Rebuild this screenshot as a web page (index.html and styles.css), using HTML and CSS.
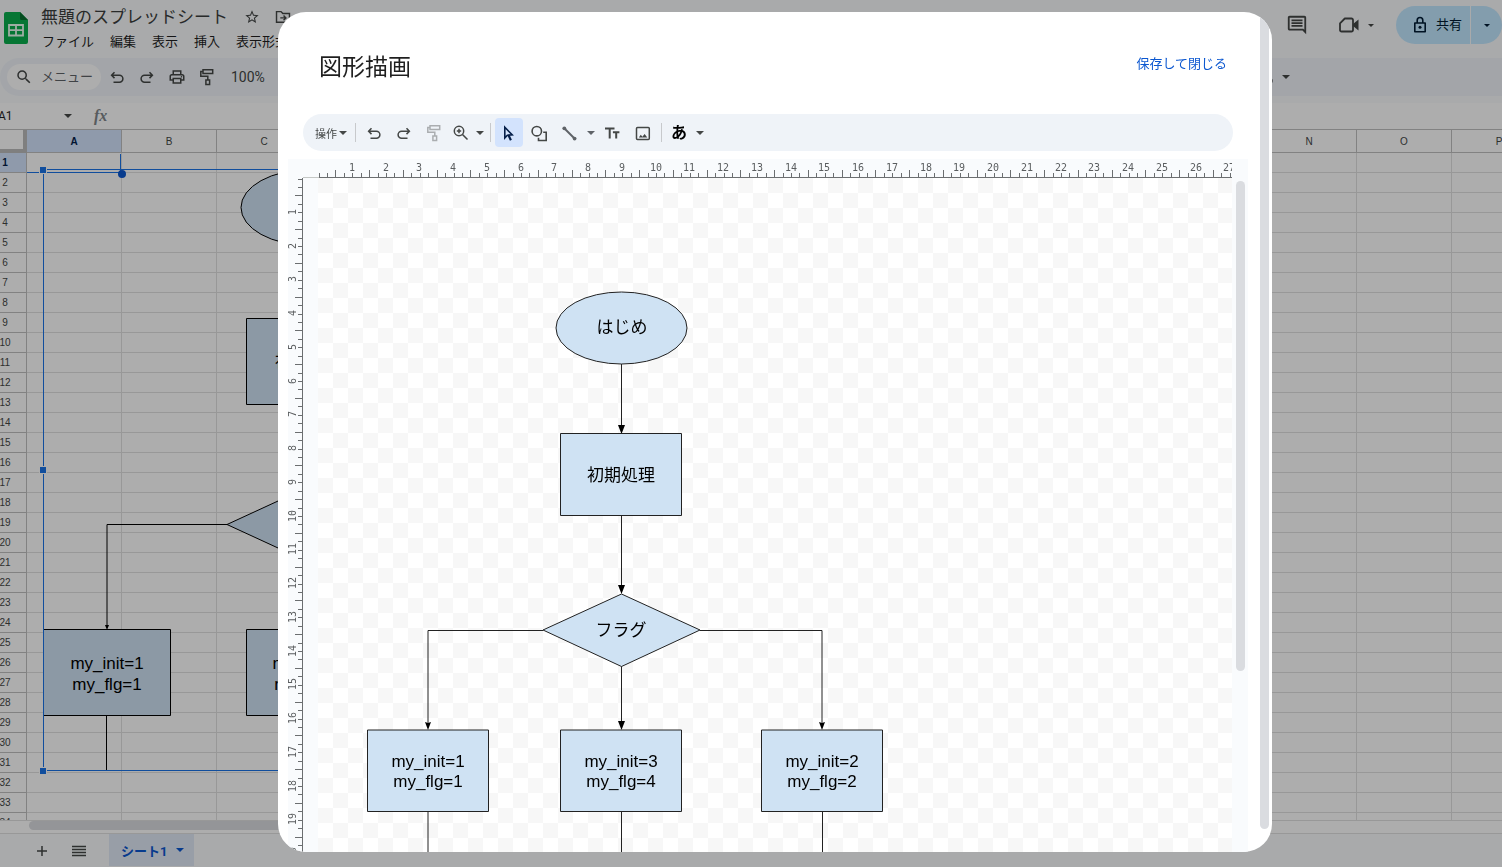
FILE: index.html
```html
<!DOCTYPE html>
<html lang="ja">
<head>
<meta charset="utf-8">
<title>無題のスプレッドシート</title>
<link rel="stylesheet" href="styles.css">
</head>
<body>
<svg class="defs" aria-hidden="true">
  <symbol id="i-caret" viewBox="0 0 8 4"><path d="M0 0h8L4 4z" fill="currentColor"/></symbol>
  <symbol id="i-undo" viewBox="0 0 18 18"><g fill="none" stroke="currentColor" stroke-width="1.5"><path d="M6.500 4.300 3.600 7.200l2.900 2.900M4 7.200h7.400a3.500 3.500 0 0 1 0 7H5.500"/></g></symbol>
  <symbol id="i-redo" viewBox="0 0 18 18"><g fill="none" stroke="currentColor" stroke-width="1.5"><path d="M11.500 4.300l2.900 2.900-2.900 2.900M14 7.200H6.600a3.500 3.500 0 0 0 0 7h5.900"/></g></symbol>
  <symbol id="i-paint" viewBox="0 0 18 18"><g fill="none" stroke="currentColor" stroke-width="1.5"><path d="M5 1.800h9.700v3.700H5zM5 3.600H2.800v4.600h7v3.600M7.900 11.900h3.700v4.500H7.900z"/></g></symbol>
  <symbol id="i-search" viewBox="0 0 24 24"><path fill="currentColor" d="M15.500 14h-.79l-.28-.27A6.471 6.471 0 0 0 16 9.500 6.500 6.500 0 1 0 9.500 16c1.610 0 3.090-.59 4.230-1.570l.27.28v.79l5 4.990L20.490 19l-4.990-5zm-6 0C7.010 14 5 11.990 5 9.500S7.010 5 9.500 5 14 7.010 14 9.500 11.990 14 9.500 14z"/></symbol>
  <symbol id="i-print" viewBox="0 0 24 24"><path fill="currentColor" d="M19 8h-1V3H6v5H5c-1.660 0-3 1.340-3 3v6h4v4h12v-4h4v-6c0-1.660-1.340-3-3-3zM8 5h8v3H8V5zm8 12v2H8v-4h8v2zm2-2v-2H6v2H4v-4c0-.55.45-1 1-1h14c.55 0 1 .45 1 1v4h-2z"/><circle cx="18" cy="11.500" r="1" fill="currentColor"/></symbol>
  <symbol id="i-star" viewBox="0 0 24 24"><path fill="currentColor" d="M22 9.240l-7.190-.62L12 2 9.190 8.630 2 9.240l5.460 4.730L5.820 21 12 17.270 18.180 21l-1.630-7.030L22 9.240zM12 15.400l-3.760 2.270 1-4.280-3.320-2.880 4.380-.38L12 6.100l1.710 4.040 4.380.38-3.320 2.880 1 4.280L12 15.400z"/></symbol>
  <symbol id="i-move" viewBox="0 0 20 18"><g fill="none" stroke="currentColor" stroke-width="1.600"><path d="M2.800 3h5l2 2.200h7.400v9.600H2.800zM7 10h6M10.600 7.400l2.600 2.600-2.600 2.600"/></g></symbol>
  <symbol id="i-comment" viewBox="0 0 24 24"><path fill="currentColor" d="M21.990 4c0-1.100-.89-2-1.990-2H4c-1.100 0-2 .9-2 2v12c0 1.100.9 2 2 2h14l4 4-.01-18zM20 4v13.170L18.830 16H4V4h16zM6 12h12v2H6zm0-3h12v2H6zm0-3h12v2H6z"/></symbol>
  <symbol id="i-video" viewBox="0 0 20 18"><path d="M5.800 2.500h6.700a1.500 1.500 0 0 1 1.500 1.500v10a1.500 1.500 0 0 1-1.500 1.500h-10A1.500 1.500 0 0 1 1 14V7.300z" fill="none" stroke="currentColor" stroke-width="1.800" stroke-linejoin="round"/><path d="M14 8l5.500-4.500v11L14 10z" fill="currentColor"/></symbol>
  <symbol id="i-lock" viewBox="0 0 14 18"><path d="M1.800 7h10.400v8.700H1.800zM4.200 7V4.300a2.800 2.800 0 0 1 5.600 0V7" fill="none" stroke="currentColor" stroke-width="1.600" stroke-linejoin="round"/><circle cx="7" cy="11.300" r="1.500" fill="currentColor"/></symbol>
  <symbol id="i-zoom" viewBox="0 0 18 18"><g fill="none" stroke="currentColor" stroke-width="1.500"><circle cx="7" cy="7" r="4.700"/><path d="M10.500 10.500l5 5M7 4.800v4.400M4.800 7h4.400"/></g></symbol>
  <symbol id="i-select" viewBox="0 0 18 18"><path d="M4.800 3.300v10.600l2.600-2.700 4.800-.4z" fill="none" stroke="currentColor" stroke-width="1.600"/><path d="M8.300 10.800l2.600 5.400" stroke="currentColor" stroke-width="2.200"/></symbol>
  <symbol id="i-shapes" viewBox="0 0 18 18"><g fill="none" stroke="currentColor" stroke-width="1.600"><circle cx="6.800" cy="7.200" r="4.700"/><path d="M13.200 8.200h3v8.300H8.500v-2.800"/></g></symbol>
  <symbol id="i-line" viewBox="0 0 18 18"><path d="M4 4l10.500 10.500" stroke="currentColor" stroke-width="2"/><circle cx="4.300" cy="4.300" r="1.900" fill="currentColor"/><circle cx="14.600" cy="14.600" r="1.900" fill="currentColor"/></symbol>
  <symbol id="i-text" viewBox="0 0 18 18"><path d="M1 4.500h9.500M5.700 4.500v10M8.900 8.300h6.500M12.200 8.300v6.200" fill="none" stroke="currentColor" stroke-width="2"/></symbol>
  <symbol id="i-image" viewBox="0 0 18 18"><rect x="2.500" y="3.500" width="12.800" height="12" rx="1" fill="none" stroke="currentColor" stroke-width="1.500"/><path d="M4.800 13.500l2-2.700 1.600 1.900 2.200-2.800 2.700 3.600z" fill="currentColor"/></symbol>
</svg>

<div class="app">
  <header class="top">
    <svg class="logo" viewBox="0 0 24 32" aria-hidden="true">
      <path d="M2 0h14l8 8v22a2 2 0 0 1-2 2H2a2 2 0 0 1-2-2V2a2 2 0 0 1 2-2z" fill="#0aae4d"/>
      <path d="M16 0l8 8h-6.500A1.500 1.500 0 0 1 16 6.500z" fill="#06702f"/>
      <path d="M5 13h14v10.500H5zM5 18.200h14M12 13v10.500" fill="none" stroke="#eafff2" stroke-width="1.800"/>
    </svg>
    <div class="doc">
      <div class="doc-name"><h1>無題のスプレッドシート</h1>
        <button class="plain" aria-label="スター"><svg class="ic16"><use href="#i-star"/></svg></button>
        <button class="plain" aria-label="移動"><svg class="ic18"><use href="#i-move"/></svg></button>
      </div>
      <nav class="menus">
        <button class="plain">ファイル</button><button class="plain">編集</button><button class="plain">表示</button><button class="plain">挿入</button><button class="plain">表示形式</button>
      </nav>
    </div>
    <div class="top-right">
      <button class="plain" aria-label="コメント"><svg class="ic22"><use href="#i-comment"/></svg></button>
      <button class="plain meet" aria-label="ビデオ会議"><svg class="ic20"><use href="#i-video"/></svg><svg class="caret-small"><use href="#i-caret"/></svg></button>
      <div class="share">
        <button class="share-main"><svg class="lock"><use href="#i-lock"/></svg><span>共有</span></button>
        <button class="share-more" aria-label="共有オプション"><svg class="caret-small"><use href="#i-caret"/></svg></button>
      </div>
    </div>
  </header>

  <div class="toolbar">
    <label class="search"><svg class="ic18"><use href="#i-search"/></svg><input type="text" placeholder="メニュー" aria-label="メニュー"></label>
    <button class="bar-btn" aria-label="元に戻す"><svg class="ic18"><use href="#i-undo"/></svg></button>
    <button class="bar-btn" aria-label="やり直す"><svg class="ic18"><use href="#i-redo"/></svg></button>
    <button class="bar-btn" aria-label="印刷"><svg class="ic18"><use href="#i-print"/></svg></button>
    <button class="bar-btn" aria-label="書式の貼り付け"><svg class="ic18"><use href="#i-paint"/></svg></button>
    <button class="plain zoom-level">100%</button>
    <button class="plain input-tools" aria-label="入力ツール"><svg class="ime-edge" viewBox="0 0 12 14"><circle cx="8" cy="11" r="2.500" fill="none" stroke="#000" stroke-width="2"/></svg><svg class="caret"><use href="#i-caret"/></svg></button>
  </div>

  <div class="formula">
    <input class="name-box" type="text" value="A1" aria-label="名前ボックス">
    <svg class="caret"><use href="#i-caret"/></svg>
    <span class="fx">fx</span>
  </div>

  <main class="sheet">
    <table class="grid"><thead></thead><tbody></tbody></table>
    <svg class="sheet-drawing" aria-hidden="true">
      <g transform="translate(0 -130)">
        <path d="M27 172.500h93.500V154" fill="none" stroke="#1a73e8"/>
        <g fill="#cfe2f3" stroke="#000">
          <ellipse cx="309.500" cy="207.500" rx="68.500" ry="38"/>
          <path d="M246.500 318.500h127v86h-127zM227 524.500l82.500-38 82.500 38-82.500 38zM43.500 629.500h127v86h-127zM246.500 629.500h127v86h-127z"/>
        </g>
        <path d="M227 524.500H107V626M106.500 716v54" fill="none" stroke="#000"/>
        <path d="M107 630l-2-5h4z"/>
        <g class="svg-label"><text x="309" y="367">初期処理</text><text x="107" y="669">my_init=1</text><text x="107" y="690">my_flg=1</text><text x="309" y="669">my_init=3</text><text x="309" y="690">my_flg=4</text></g>
        <path d="M400 169.500H43.500v601H400" fill="none" stroke="#1a73e8"/>
        <g fill="#1a73e8" stroke="#fff"><rect x="39.500" y="166.500" width="7" height="7"/><rect x="39.500" y="466.500" width="7" height="7"/><rect x="39.500" y="767.500" width="7" height="7"/></g>
        <circle cx="122" cy="174" r="4" fill="#0b57d0"/>
      </g>
    </svg>
  </main>
  <div class="hscroll"><div class="hthumb"></div></div>
  <footer class="tabs">
    <button class="plain tab-ic" aria-label="シートを追加"><svg class="ic14" viewBox="0 0 14 14"><path d="M7 2v10M2 7h10" stroke="currentColor" stroke-width="1.500"/></svg></button>
    <button class="plain tab-ic" aria-label="すべてのシート"><svg class="ic14" viewBox="0 0 14 14"><path d="M0 2.500h14M0 5.500h14M0 8.500h14M0 11.500h14" stroke="currentColor" stroke-width="1.300"/></svg></button>
    <button class="tab">シート1<svg class="caret"><use href="#i-caret"/></svg></button>
  </footer>
</div>

<div class="scrim">
  <section class="dialog" role="dialog" aria-labelledby="dialog-title">
    <header class="dialog-head">
      <h2 id="dialog-title">図形描画</h2>
      <a href="#">保存して閉じる</a>
    </header>
    <div class="draw-bar">
      <button class="plain actions">操作<svg class="caret"><use href="#i-caret"/></svg></button>
      <i class="sep"></i>
      <button class="tool" aria-label="元に戻す"><svg class="ic18"><use href="#i-undo"/></svg></button>
      <button class="tool" aria-label="やり直す"><svg class="ic18"><use href="#i-redo"/></svg></button>
      <button class="tool" aria-label="書式の貼り付け" disabled><svg class="ic18"><use href="#i-paint"/></svg></button>
      <button class="split tight" aria-label="ズーム"><span><svg class="ic18"><use href="#i-zoom"/></svg></span><svg class="caret"><use href="#i-caret"/></svg></button>
      <i class="sep"></i>
      <button class="tool active" aria-label="選択"><svg class="ic18"><use href="#i-select"/></svg></button>
      <button class="tool" aria-label="図形"><svg class="ic18"><use href="#i-shapes"/></svg></button>
      <button class="split line" aria-label="線"><span><svg class="ic18"><use href="#i-line"/></svg></span><svg class="caret"><use href="#i-caret"/></svg></button>
      <button class="tool" aria-label="テキスト ボックス"><svg class="ic18"><use href="#i-text"/></svg></button>
      <button class="tool" aria-label="画像"><svg class="ic18"><use href="#i-image"/></svg></button>
      <i class="sep"></i>
      <button class="split ime"><span>あ</span><svg class="caret"><use href="#i-caret"/></svg></button>
    </div>
    <div class="stage">
      <svg class="ruler-h"></svg>
      <svg class="ruler-v"></svg>
      <div class="board">
        <svg class="chart">
          <g transform="translate(-318 -178)">
            <g fill="none" stroke="#222"><path d="M621.500 364v63M621.500 516v72M621.500 666v57M543 630.500H428V723M700 630.500h122V723M428 811v60M621.500 811v60M822.500 811v60"/></g>
            <path d="M621.500 434l-3.500-9h7zM621.500 594l-3.500-9h7zM621.500 730l-3.500-9h7zM428 730l-3-8 3 1 3-1zM822 730l-3-8 3 1 3-1z"/>
            <g fill="#cfe2f3" stroke="#222">
              <ellipse cx="621.500" cy="328" rx="65.500" ry="36"/>
              <path d="M560.500 433.500h121v82h-121zM543 630l78.500-36 78.500 36-78.500 36.500zM367.500 730h121v81.500h-121zM560.500 730h121v81.500h-121zM761.500 730h121v81.500h-121z"/>
            </g>
            <g class="svg-label">
              <text x="622" y="333">はじめ</text><text x="621" y="481">初期処理</text><text x="621" y="636">フラグ</text>
              <text x="428" y="767">my_init=1</text><text x="428" y="787">my_flg=1</text>
              <text x="621" y="767">my_init=3</text><text x="621" y="787">my_flg=4</text>
              <text x="822" y="767">my_init=2</text><text x="822" y="787">my_flg=2</text>
            </g>
          </g>
        </svg>
      </div>
      <div class="vscroll"><div class="vthumb"></div></div>
    </div>
    <div class="dialog-scroll"></div>
  </section>
</div>
<script src="script.js"></script>
</body>
</html>
```
FILE: styles.css
```css
* { box-sizing: border-box; }
body {
  margin: 0;
  height: 100vh;
  overflow: hidden;
  font-family: Roboto, "Noto Sans CJK JP", sans-serif;
  font-size: 13px;
  color: #1f1f1f;
}
button, input { font: inherit; color: inherit; border: 0; background: none; padding: 0; margin: 0; }
svg { display: block; flex: none; }
h1, h2 { margin: 0; font-weight: 400; }
.defs { position: absolute; width: 0; height: 0; }
.plain { display: flex; align-items: center; white-space: nowrap; }
.ic14 { width: 14px; height: 14px; }
.ic16 { width: 16px; height: 16px; }
.ic18 { width: 18px; height: 18px; }
.ic20 { width: 20px; height: 18px; }
.ic22 { width: 22px; height: 22px; }
.caret { width: 8px; height: 4px; }
.caret-small { width: 6px; height: 3px; }

.app { height: 100%; display: flex; flex-direction: column; background: #f9fbfd; }

.top { display: flex; height: 58px; flex: none; color: #444746; }
.logo { width: 24px; height: 32px; margin: 12px 13px 0 4px; }
.doc { display: flex; flex-direction: column; padding-top: 5px; }
.doc-name { display: flex; align-items: center; height: 24px; gap: 14px; }
.doc-name h1 { font-size: 17px; line-height: 24px; margin-right: 2px; color: #3c3f3e; }
.menus { display: flex; gap: 16px; height: 22px; padding-left: 1px; color: #1f1f1f; }
.top-right { display: flex; align-items: center; height: 38px; margin: 6px 0 0 auto; }
.meet { gap: 9px; margin: 0 22px 0 31px; }
.share { display: flex; height: 38px; gap: 1px; color: #001d35; }
.share-main { display: flex; align-items: center; gap: 9px; width: 74px; padding-left: 17px; background: #c2e7ff; border-radius: 19px 0 0 19px; }
.share-main span { padding-bottom: 3px; }
.share-more { display: flex; align-items: center; justify-content: center; width: 31px; background: #c2e7ff; border-radius: 0 19px 19px 0; }
.lock { width: 14px; height: 18px; }

.toolbar { display: flex; align-items: center; height: 38px; flex: none; padding-left: 7px; background: #f0f4f9; border-radius: 19px 0 0 19px; color: #444746; }
.search { display: flex; align-items: center; gap: 8px; width: 94px; height: 26px; padding: 0 7px 0 8px; background: #fff; border-radius: 13px; }
.search input { width: 56px; height: 18px; padding-bottom: 2px; }
.search input::placeholder { color: #5f6368; opacity: 1; }
.bar-btn { display: flex; justify-content: center; width: 30px; }
.search + .bar-btn { margin-left: 1px; }
.zoom-level { margin-left: 9px; font-size: 14px; }
.input-tools { gap: 9px; margin: 0 212px 0 auto; }
.ime-edge { width: 12px; height: 14px; }

.formula { display: flex; align-items: center; height: 27px; flex: none; margin-top: 7px; background: #fff; color: #444746; border-bottom: 1px solid #c0c0c0; }
.name-box { width: 66px; margin-left: -2px; font: 12px Roboto, sans-serif; color: #1f1f1f; }
.fx { margin-left: 22px; font: italic bold 16px "Liberation Serif", serif; color: #80868b; }

.sheet { position: relative; flex: 1; min-height: 0; overflow: hidden; background: #fff; }
.grid { margin-left: -19px; border-collapse: separate; border-spacing: 0; table-layout: fixed; font: 10px "Liberation Sans", Arial, sans-serif; }
.grid th, .grid td { height: 20px; padding: 0; border: solid #e1e1e1; border-width: 0 1px 1px 0; }
.grid th { font-weight: 400; text-align: center; border-color: #c0c0c0; color: #444746; }
.grid tbody th { padding-left: 3px; }
.grid thead th { height: 23px; width: 95px; }
.grid thead th:first-child { width: 46px; border: solid #bcbcbc; border-width: 0 4px 4px 0; }
.grid .on { background: #d3e3fd; color: #041e49; font-weight: 700; }
.sheet-drawing { position: absolute; left: 0; top: 0; width: 400px; height: 100%; }
.svg-label { font: 17px "Liberation Sans", "Noto Sans CJK JP", sans-serif; text-anchor: middle; fill: #000; }

.hscroll { flex: none; height: 13px; background: #fff; border-top: 1px solid #e1e1e1; padding-left: 29px; }
.hthumb { width: 60%; height: 9px; background: #dadce0; border-radius: 5px; }
.tabs { display: flex; flex: none; height: 34px; padding-left: 35px; border-top: 1px solid #e1e1e1; color: #444746; }
.tab-ic { margin-right: 23px; }
.tab { display: flex; align-items: center; gap: 9px; height: 32px; padding: 0 10px 0 12px; font-weight: 700; font-size: 13px; background: #e1e9f7; color: #0b57d0; }

.scrim { position: fixed; inset: 0; display: flex; padding: 12px 230px 15px 278px; background: rgba(0, 0, 0, .32); }
.dialog { position: relative; flex: 1; min-width: 0; display: flex; flex-direction: column; overflow: hidden; background: #fff; border-radius: 28px; }
.dialog-head { display: flex; justify-content: space-between; align-items: flex-start; height: 102px; flex: none; padding: 39px 45px 0 41px; }
.dialog-head h2 { font-size: 23px; line-height: 34px; }
.dialog-head a { color: #0b57d0; text-decoration: none; line-height: 26px; }

.draw-bar { display: flex; align-items: center; height: 37px; flex: none; margin: 0 39px 0 25px; padding-left: 12px; background: #eff3f8; border-radius: 19px; color: #444746; }
.actions { font-size: 11px; gap: 2px; margin-right: 5px; }
.sep { width: 1px; height: 19px; margin: 0 3px; background: #c7c9cc; }
.tool { display: flex; align-items: center; justify-content: center; width: 28px; height: 29px; margin: 0 1px; border-radius: 4px; }
.tool:disabled { opacity: .4; }
.tool.active { background: #d3e3fd; color: #041e49; }
.split { display: flex; align-items: center; gap: 3px; padding-right: 3px; }
.split span { display: flex; justify-content: center; width: 30px; }
.split.tight span { width: 24px; }
.split.line { color: #5f6368; }
.split.ime span { width: 28px; font-size: 16px; line-height: 24px; font-weight: 700; color: #000; }

.stage { flex: 1; min-height: 0; display: grid; grid-template-columns: 15px 15px minmax(0, 1fr) 16px; grid-template-rows: 19px minmax(0, 1fr); margin: 8px 24px 0 10px; background: #f9fbfd; }
.ruler-h { grid-area: 1 / 2 / 2 / 4; width: 100%; height: 19px; overflow: hidden; }
.ruler-v { grid-area: 2 / 1; width: 15px; height: 100%; overflow: hidden; }
.ruler-h text, .ruler-v text { font: 10px "DejaVu Sans Mono", monospace; text-anchor: middle; fill: #5a5d5f; }
.ruler-h path, .ruler-v path { stroke: #6b6e70; fill: none; }
.board { grid-area: 2 / 3; overflow: hidden; background: repeating-conic-gradient(#fff 0 25%, #f7f7f7 0 50%) 0 0 / 30px 30px; }
.chart { width: 100%; height: 100%; }
.vscroll { grid-area: 2 / 4; padding: 3px 3px 0 4px; }
.vthumb { height: 73%; background: #dadce0; border-radius: 5px; }
.dialog-scroll { position: absolute; top: 0; right: 3px; bottom: 23px; width: 9px; background: #dadce0; border-radius: 5px; }
```
FILE: script.js
```js
// Spreadsheet cells: enough columns and rows to fill the window
const sheet = document.querySelector(".sheet");
const cols = Math.ceil((sheet.clientWidth - 27) / 95);
const rowCount = Math.ceil((sheet.clientHeight - 23) / 20);
const letters = "ABCDEFGHIJKLMNOPQRSTUVWXYZ".slice(0, cols).split("");
const grid = document.querySelector(".grid");
grid.style.width = `${46 + letters.length * 95}px`;
grid.tHead.innerHTML =
  "<tr><th></th>" + letters.map((l, i) => `<th${i ? "" : ' class="on"'}>${l}</th>`).join("") + "</tr>";
let rows = "";
for (let r = 1; r <= rowCount; r++) {
  rows += `<tr><th${r === 1 ? ' class="on"' : ""}>${r}</th>${"<td></td>".repeat(letters.length)}</tr>`;
}
grid.tBodies[0].innerHTML = rows;

// Rulers: one label per centimetre, four ticks per centimetre
const CM = 33.75;
function ticks(origin, length, draw) {
  let d = "";
  for (let q = 0; origin + q * CM / 4 < length; q++) {
    d += draw(Math.round(origin + q * CM / 4) + 0.5, q % 4 === 2 ? 7 : 4);
  }
  return d;
}
const rulerH = document.querySelector(".ruler-h");
const rulerV = document.querySelector(".ruler-v");
const w = rulerH.clientWidth;
const t = rulerV.clientHeight;
let h = `<path d="M0 18.5H16" style="stroke:#c4c7c5"/><path d="M16 18.5H${w}${ticks(15.5, w, (p, n) => `M${p} 18v-${n}`)}"/>`;
let v = `<path d="M14.5 0V${t}${ticks(0.5, t, (p, n) => `M14 ${p}h-${n}`)}"/>`;
for (let n = 1; 15 + n * CM < w + 6; n++) {
  h += `<text x="${Math.round(15 + n * CM)}" y="12">${n}</text>`;
}
for (let n = 1; n * CM < t + 6; n++) {
  v += `<text transform="translate(8 ${Math.round(n * CM)}) rotate(-90)">${n}</text>`;
}
rulerH.innerHTML = h;
rulerV.innerHTML = v;
```
